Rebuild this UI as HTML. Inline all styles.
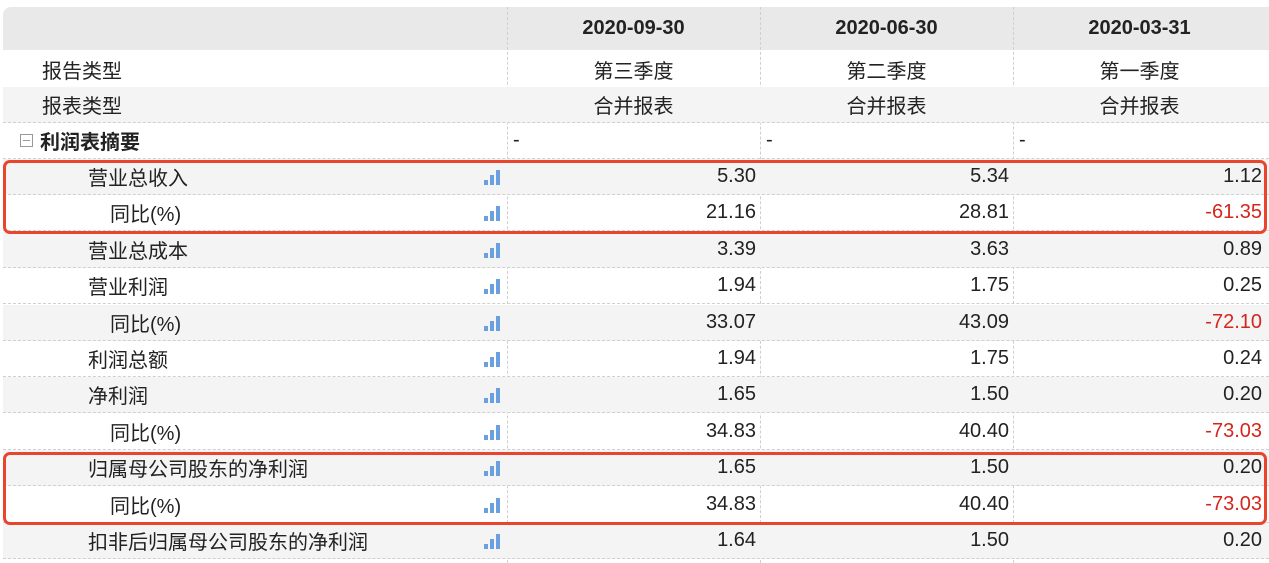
<!DOCTYPE html>
<html><head><meta charset="utf-8"><style>
body{margin:0;width:1269px;height:563px;overflow:hidden;background:#fff;font-family:"Liberation Sans","Noto Sans CJK SC",sans-serif;color:#222;position:relative}
.hdr{position:absolute;left:3px;top:7px;width:1266px;height:43px;background:#e9e9e9;border-top-left-radius:8px}
.row{position:absolute;left:3px;width:1266px;height:36px;border-bottom:1px dashed #d0d0d0;box-sizing:border-box;font-size:20px}
.g{background:#f4f4f4}
.c{position:absolute;top:0;height:100%;display:flex;align-items:center}
.lab{left:0}
.v{justify-content:flex-end;width:249px}
.v1{left:504px}.v2{left:757px}.v3{left:1010px}
.ctr{justify-content:center;width:253px}
.vl{position:absolute;top:7px;height:556px;border-left:1px dashed #cfcfcf}
.ic{position:absolute;left:481px;top:11px;width:16px;height:15px}
.ic i{position:absolute;bottom:0;width:4px;background:#6a9fe0}
.red{color:#d5261c}
.box{position:absolute;left:3px;width:1264px;border:3px solid #e8452c;border-radius:7px;box-sizing:border-box}
</style></head><body>
<div class="hdr"></div>
<div class="vl" style="left:507px"></div><div class="vl" style="left:760px"></div><div class="vl" style="left:1013px"></div>
<div style="position:absolute;top:7px;left:507px;width:253px;height:43px;display:flex;align-items:center;justify-content:center;font-weight:bold;font-size:20px">2020-09-30</div>
<div style="position:absolute;top:7px;left:760px;width:253px;height:43px;display:flex;align-items:center;justify-content:center;font-weight:bold;font-size:20px">2020-06-30</div>
<div style="position:absolute;top:7px;left:1013px;width:253px;height:43px;display:flex;align-items:center;justify-content:center;font-weight:bold;font-size:20px">2020-03-31</div>

<div class="row" style="top:51px;border:none"><div class="c lab" style="left:39px">报告类型</div><div class="c ctr" style="left:504px">第三季度</div><div class="c ctr" style="left:757px">第二季度</div><div class="c ctr" style="left:1010px">第一季度</div></div>
<div class="row g" style="top:87px"><div class="c lab" style="left:39px">报表类型</div><div class="c ctr" style="left:504px">合并报表</div><div class="c ctr" style="left:757px">合并报表</div><div class="c ctr" style="left:1010px">合并报表</div></div>
<div class="row" style="top:123px"><div class="c lab" style="left:17px;font-weight:bold"><span style="display:inline-block;width:11px;height:11px;border:1px solid #999;margin-right:7px;position:relative;font-weight:normal"><span style="position:absolute;left:2px;top:5px;width:7px;height:1px;background:#999"></span></span>利润表摘要</div><div class="c" style="left:510px">-</div><div class="c" style="left:763px">-</div><div class="c" style="left:1016px">-</div></div>

<div id="rows"></div>
<div class="box" style="top:160px;height:74px"></div>
<div class="box" style="top:452px;height:73px"></div>
<script>
var d=[["营业总收入",85,"5.30","5.34","1.12",0],["同比(%)",107,"21.16","28.81","-61.35",1],["营业总成本",85,"3.39","3.63","0.89",0],["营业利润",85,"1.94","1.75","0.25",0],["同比(%)",107,"33.07","43.09","-72.10",1],["利润总额",85,"1.94","1.75","0.24",0],["净利润",85,"1.65","1.50","0.20",0],["同比(%)",107,"34.83","40.40","-73.03",1],["归属母公司股东的净利润",85,"1.65","1.50","0.20",0],["同比(%)",107,"34.83","40.40","-73.03",1],["扣非后归属母公司股东的净利润",85,"1.64","1.50","0.20",0]];
var h="";d.forEach(function(r,i){var t=159+i*36.4;h+='<div class="row'+(i%2==0?' g':'')+'" style="top:'+t+'px"><div class="c lab" style="left:'+r[1]+'px">'+r[0]+'</div><div class="ic"><i style="left:0;height:5px"></i><i style="left:6px;height:10px"></i><i style="left:12px;height:15px"></i></div><div class="c v v1">'+r[2]+'</div><div class="c v v2">'+r[3]+'</div><div class="c v v3'+(r[5]?' red':'')+'">'+r[4]+'</div></div>';});
document.getElementById("rows").innerHTML=h;
</script>
</body></html>
